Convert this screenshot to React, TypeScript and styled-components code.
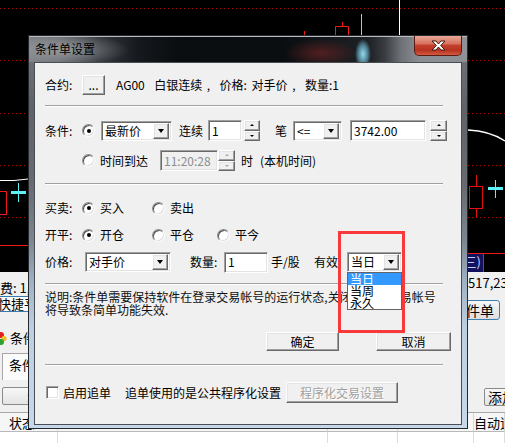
import React from "react";
import styled, { createGlobalStyle, css } from "styled-components";

const FONT = `"Noto Sans CJK SC", "Noto Sans", sans-serif`;

const Global = createGlobalStyle`
  html, body { margin: 0; padding: 0; background: #000; }
  body { font-family: ${FONT}; font-size: 12px; }
`;

const Desktop = styled.div`
  position: relative;
  width: 505px;
  height: 443px;
  background: #000;
  display: flex;
  flex-direction: column;
  font-family: ${FONT};
  color: #000;
`;

const ChartSvg = styled.svg`
  display: block;
  flex-shrink: 0;
`;

function Chart() {
  const dotted = [8, 60, 113, 165, 217];
  return (
    <ChartSvg width={505} height={272} viewBox="0 0 505 272">
      <rect width="505" height="272" fill="#000" />
      {dotted.map((y) => (
        <line key={y} x1="0" x2="505" y1={y + 0.5} y2={y + 0.5} stroke="#b80000" strokeDasharray="1 3" />
      ))}
      <line x1="399.5" y1="0" x2="399.5" y2="35" stroke="#fff" />
      <line x1="361.5" y1="14" x2="361.5" y2="35" stroke="#5ee8f4" />
      <path d="M335.5 35 V26.5 H348.5 V35" stroke="#f01818" fill="none" />
      <path d="M342.5 22 V26.5" stroke="#f01818" />
      <path d="M304.5 31 V35" stroke="#f01818" />
      <path d="M0 180.5 H14 L28 179" stroke="#fff" fill="none" />
      <rect x="-1.5" y="191.5" width="8" height="23" stroke="#f01818" fill="none" />
      <rect x="11" y="191" width="15" height="3" fill="#5ef0f8" />
      <line x1="18.5" y1="183" x2="18.5" y2="202" stroke="#5ef0f8" />
      <line x1="0" y1="245.5" x2="28" y2="245.5" stroke="#f01818" />
      <path d="M468 130 Q490 131 505 141" stroke="#fff" strokeWidth="1.3" fill="none" />
      <rect x="469.5" y="186.5" width="13" height="22" stroke="#e41010" fill="none" />
      <line x1="476.5" y1="175" x2="476.5" y2="186" stroke="#e41010" />
      <line x1="476.5" y1="209" x2="476.5" y2="217" stroke="#e41010" />
      <rect x="488" y="187" width="15" height="3" fill="#5ef0f8" />
      <line x1="495.5" y1="180" x2="495.5" y2="198" stroke="#5ef0f8" />
      <rect x="440" y="254" width="43" height="18" fill="#12125e" />
      <line x1="440" y1="253.5" x2="505" y2="253.5" stroke="#f01818" />
      <line x1="483.5" y1="253" x2="483.5" y2="272" stroke="#f01818" />
      <text x="481" y="267" textAnchor="end" fill="#c8ccff" fontSize="13" fontFamily={FONT}>
        (三)
      </text>
    </ChartSvg>
  );
}

const Panel = styled.div`
  flex: 1;
  background: #f0f0f0;
  display: flex;
  flex-direction: column;
  font-size: 13px;
  overflow: hidden;
`;

const PanelRow = styled.div<{ $h: number }>`
  height: ${(p) => p.$h}px;
  flex-shrink: 0;
  display: flex;
  justify-content: space-between;
  align-items: flex-start;
`;

const PanelText = styled.span<{ $pt?: number; $mr?: number }>`
  padding-top: ${(p) => p.$pt ?? 0}px;
  margin-right: ${(p) => p.$mr ?? 0}px;
  line-height: 16px;
  white-space: nowrap;
`;

const FlatTab = styled.div`
  margin-left: -3px;
  width: 70px;
  height: 16px;
  box-sizing: border-box;
  border: 1px solid #3a78b0;
  background: #fafafa;
  line-height: 14px;
  white-space: nowrap;
`;

const FocusButton = styled.div`
  margin-top: 4px;
  margin-right: 5px;
  width: 44px;
  height: 20px;
  box-sizing: border-box;
  border: 1px solid #3c7fb1;
  border-radius: 3px;
  background: linear-gradient(#f6f6f6, #dedede);
  font-size: 14px;
  line-height: 18px;
  text-align: right;
  padding-right: 5px;
  white-space: nowrap;
`;

const IconLabel = styled.div`
  margin-top: 8px;
  display: flex;
  align-items: center;
  gap: 3px;
  margin-left: -2px;
  line-height: 16px;
`;

const TabBox = styled.div`
  margin-top: 3px;
  margin-left: 2px;
  width: 60px;
  height: 27px;
  box-sizing: border-box;
  border: 1px solid #a8a8a8;
  border-bottom: none;
  background: #fbfbfb;
  padding-left: 6px;
  line-height: 22px;
  white-space: nowrap;
`;

const GhostButton = styled.div<{ $w: number; $mt: number; $ml?: number; $mr?: number; $pl?: number }>`
  margin-top: ${(p) => p.$mt}px;
  margin-left: ${(p) => p.$ml ?? 0}px;
  margin-right: ${(p) => p.$mr ?? 0}px;
  width: ${(p) => p.$w}px;
  height: 18px;
  box-sizing: border-box;
  border: 1px solid #8a8a8a;
  border-radius: 2px;
  background: linear-gradient(#f7f7f7, #e4e4e4);
  line-height: 16px;
  padding-left: ${(p) => p.$pl ?? 3}px;
  font-size: 14px;
  white-space: nowrap;
  overflow: hidden;
`;

const Table = styled.div`
  margin-top: 2px;
  flex: 1;
  border-top: 1px solid #a8a8a8;
  display: grid;
  grid-template-columns: 58px 270px 70px 76px 1fr;
  grid-template-rows: 19px 1fr;
  background: #fff;
`;

const HeadCell = styled.div<{ $pl?: number }>`
  background: #f6f6f6;
  border-right: 1px solid #d6d6d6;
  border-bottom: 1px solid #b8b8b8;
  padding-left: ${(p) => p.$pl ?? 0}px;
  line-height: 19px;
  font-size: 13px;
  white-space: nowrap;
  overflow: hidden;
`;

const BodyCell = styled.div`
  border-right: 1px solid #dcdcdc;
`;

const DialogWindow = styled.div`
  position: absolute;
  left: 28px;
  top: 35px;
  width: 440px;
  height: 394px;
  box-sizing: border-box;
  border: 1px solid #25292d;
  background: linear-gradient(to bottom, #74787c 0px, #5f6367 70px, #686c71 150px, #7c8690 205px, #9eb1c3 245px, #bccfe1 290px, #c6d8ea 394px);
  display: flex;
  flex-direction: column;
`;

const GlassCaption = styled.div`
  height: 26px;
  flex-shrink: 0;
  display: flex;
  align-items: flex-start;
  padding: 0 5px;
  background-color: #0b0e11;
  background-image: radial-gradient(closest-side, rgba(152, 228, 247, 0.95), rgba(120, 205, 232, 0.55) 60%, rgba(120, 205, 232, 0)), radial-gradient(closest-side, rgba(124, 36, 36, 0.6), rgba(124, 36, 36, 0)), radial-gradient(closest-side, rgba(180, 185, 190, 0.6), rgba(180, 185, 190, 0)), linear-gradient(90deg, #7e8286 0px, #6a6e72 30px, #34383c 70px, #15181c 110px, #0a0d10 150px, #0b0e11 255px, #1e2125 340px, #393d41 356px, #6e7276 372px, #8a8e92 390px, #8e9296 438px);
  background-size: 16px 30px, 72px 28px, 124px 32px, 100% 100%;
  background-position: 326px 2px, 256px 2px, -24px -3px, 0 0;
  background-repeat: no-repeat;
  border-top: 1px solid #b8bcc0;
  box-sizing: border-box;
`;

const CaptionText = styled.span`
  margin-top: 4px;
  margin-left: 1px;
  font-size: 12px;
  line-height: 16px;
  color: #000;
`;

const CloseButton = styled.div`
  margin-left: auto;
  margin-top: -1px;
  width: 48px;
  height: 20px;
  box-sizing: border-box;
  border: 1px solid #5a1c12;
  border-top: none;
  border-radius: 0 0 5px 5px;
  background: linear-gradient(#e8a797 0%, #d8735f 40%, #c3412c 50%, #b73320 75%, #d35a40 100%);
  display: flex;
  align-items: center;
  justify-content: center;
`;

const Client = styled.div`
  margin: 0 5px;
  height: 363px;
  flex-shrink: 0;
  box-sizing: border-box;
  border: 1px solid #4a4e52;
  background: #f0f0f0;
  padding: 0 10px;
  display: flex;
  flex-direction: column;
  font-size: 12px;
  line-height: 1;
`;

const sunken = css`
  box-sizing: border-box;
  border: 1px solid;
  border-color: #a0a0a0 #ffffff #ffffff #a0a0a0;
  box-shadow: inset 1px 1px 0 #696969, inset -1px -1px 0 #e3e3e3;
`;

const raised = css`
  box-sizing: border-box;
  border: 1px solid;
  border-color: #ffffff #696969 #696969 #ffffff;
  box-shadow: inset -1px -1px 0 #a0a0a0, inset 1px 1px 0 #e3e3e3;
  background: #f0f0f0;
`;

const Row = styled.div<{ $top: number; $h: number; $end?: boolean }>`
  margin-top: ${(p) => p.$top}px;
  height: ${(p) => p.$h}px;
  flex-shrink: 0;
  display: flex;
  align-items: center;
  justify-content: ${(p) => (p.$end ? "flex-end" : "flex-start")};
  white-space: nowrap;
`;

const Sep = styled.div<{ $top: number }>`
  margin-top: ${(p) => p.$top}px;
  margin-right: 8px;
  height: 2px;
  flex-shrink: 0;
  box-sizing: border-box;
  border-top: 1px solid #a0a0a0;
  border-bottom: 1px solid #ffffff;
`;

const Label = styled.span<{ $w?: number; $ml?: number; $ws?: number }>`
  flex-shrink: 0;
  width: ${(p) => (p.$w ? `${p.$w}px` : "auto")};
  margin-left: ${(p) => p.$ml ?? 0}px;
  word-spacing: ${(p) => p.$ws ?? 0}px;
  white-space: pre;
`;

const PushButton = styled.div<{ $w: number; $h: number; $ml?: number; $disabled?: boolean }>`
  ${raised};
  flex-shrink: 0;
  width: ${(p) => p.$w}px;
  height: ${(p) => p.$h}px;
  margin-left: ${(p) => p.$ml ?? 0}px;
  display: flex;
  align-items: center;
  justify-content: center;
  color: ${(p) => (p.$disabled ? "#a0a0a0" : "#000")};
  text-shadow: ${(p) => (p.$disabled ? "1px 1px 0 #fff" : "none")};
`;

const Edit = styled.div<{ $w: number; $ml?: number; $disabled?: boolean }>`
  ${sunken};
  flex-shrink: 0;
  width: ${(p) => p.$w}px;
  height: 21px;
  margin-left: ${(p) => p.$ml ?? 0}px;
  padding-left: 3px;
  display: flex;
  align-items: center;
  background: ${(p) => (p.$disabled ? "#f0f0f0" : "#fff")};
  color: ${(p) => (p.$disabled ? "#8d8d8d" : "#000")};
`;

const ComboFrame = styled.div<{ $w: number; $ml?: number }>`
  ${sunken};
  position: relative;
  flex-shrink: 0;
  width: ${(p) => p.$w}px;
  height: 20px;
  margin-left: ${(p) => p.$ml ?? 0}px;
  background: #fff;
  display: flex;
  align-items: center;
  padding: 2px;
`;

const ComboValue = styled.span`
  flex: 1;
  padding-left: 1px;
  overflow: hidden;
`;

const DropButton = styled.span`
  ${raised};
  width: 16px;
  height: 16px;
  display: flex;
  align-items: center;
  justify-content: center;
`;

const Arrow = styled.span<{ $up?: boolean; $size?: number; $color?: string }>`
  width: 0;
  height: 0;
  border-left: ${(p) => p.$size ?? 3.5}px solid transparent;
  border-right: ${(p) => p.$size ?? 3.5}px solid transparent;
  ${(p) =>
    p.$up
      ? `border-bottom: ${Math.ceil(p.$size ?? 3.5)}px solid ${p.$color ?? "#000"};`
      : `border-top: ${Math.ceil(p.$size ?? 3.5)}px solid ${p.$color ?? "#000"};`}
`;

const SpinStack = styled.div<{ $w: number; $ml?: number }>`
  flex-shrink: 0;
  width: ${(p) => p.$w}px;
  height: 21px;
  margin-left: ${(p) => p.$ml ?? 0}px;
  display: flex;
  flex-direction: column;
`;

const SpinButton = styled.span`
  ${raised};
  flex: 1;
  display: flex;
  align-items: center;
  justify-content: center;
`;

const DropList = styled.div`
  position: absolute;
  left: -1px;
  top: calc(100% + 1px);
  width: 55px;
  box-sizing: border-box;
  border: 1px solid #646464;
  background: #fff;
  z-index: 2;
`;

const DropItem = styled.div<{ $active?: boolean }>`
  height: 12px;
  line-height: 12px;
  padding-left: 2px;
  font-size: 12px;
  background: ${(p) => (p.$active ? "#3399ff" : "#fff")};
  color: ${(p) => (p.$active ? "#fff" : "#000")};
`;

const Radio = styled.span<{ $checked?: boolean }>`
  position: relative;
  flex-shrink: 0;
  width: 13px;
  height: 13px;
  box-sizing: border-box;
  border-radius: 50%;
  border: 1px solid;
  border-color: #8a8a8a #fdfdfd #fdfdfd #8a8a8a;
  box-shadow: inset 1px 1px 0 #505050, inset -1px -1px 0 #dcdcdc;
  background: #fff;
  &::after {
    content: "";
    display: ${(p) => (p.$checked ? "block" : "none")};
    position: absolute;
    left: 3.5px;
    top: 3.5px;
    width: 4px;
    height: 4px;
    border-radius: 50%;
    background: #000;
  }
`;

const Option = styled.span<{ $w?: number }>`
  display: flex;
  align-items: center;
  gap: 5px;
  width: ${(p) => (p.$w ? `${p.$w}px` : "auto")};
  flex-shrink: 0;
`;

const CheckBox = styled.span<{ $ml?: number }>`
  ${sunken};
  flex-shrink: 0;
  width: 13px;
  height: 13px;
  margin-left: ${(p) => p.$ml ?? 0}px;
  background: #fff;
`;

const Desc = styled.div<{ $top: number }>`
  margin-top: ${(p) => p.$top}px;
  line-height: 13px;
  flex-shrink: 0;
  white-space: nowrap;
  color: #111;
`;

const Annotation = styled.div`
  position: absolute;
  left: 338px;
  top: 231px;
  width: 67px;
  height: 102px;
  box-sizing: border-box;
  border: 3px solid #fa3a3a;
  pointer-events: none;
  z-index: 5;
`;

function Combo({ w, ml, value, children }: { w: number; ml?: number; value: string; children?: React.ReactNode }) {
  return (
    <ComboFrame $w={w} $ml={ml}>
      <ComboValue>{value}</ComboValue>
      <DropButton>
        <Arrow />
      </DropButton>
      {children}
    </ComboFrame>
  );
}

function Spin({ w, ml, disabled }: { w: number; ml?: number; disabled?: boolean }) {
  const c = disabled ? "#a8a8a8" : "#000";
  return (
    <SpinStack $w={w} $ml={ml}>
      <SpinButton>
        <Arrow $up $size={2} $color={c} />
      </SpinButton>
      <SpinButton>
        <Arrow $size={2} $color={c} />
      </SpinButton>
    </SpinStack>
  );
}

function CloseGlyph() {
  return (
    <svg width="15" height="11" viewBox="0 0 15 11">
      <path
        d="M1 1 H5 L7.5 4 L10 1 H14 L9.7 5.5 L14 10 H10 L7.5 7 L5 10 H1 L5.3 5.5 Z"
        fill="#ffffff"
        stroke="#3b1c16"
        strokeWidth="1"
        strokeLinejoin="round"
      />
    </svg>
  );
}

function Flower() {
  return (
    <svg width="9" height="13" viewBox="0 0 9 13">
      <circle cx="3" cy="3" r="3" fill="#e02020" />
      <circle cx="6" cy="6.5" r="2.6" fill="#f0c020" />
      <circle cx="3" cy="10" r="3" fill="#30a030" />
    </svg>
  );
}

export default function App() {
  return (
    <>
      <Global />
      <Desktop>
        <Chart />
        <Panel>
          <PanelRow $h={24}>
            <PanelText $pt={8}>费: 1,</PanelText>
            <PanelText $pt={3} $mr={-10}>1,517,234</PanelText>
          </PanelRow>
          <PanelRow $h={26}>
            <FlatTab>快捷平仓</FlatTab>
            <FocusButton>件单</FocusButton>
          </PanelRow>
          <PanelRow $h={28}>
            <IconLabel>
              <Flower />
              <span>条件单</span>
            </IconLabel>
          </PanelRow>
          <PanelRow $h={30}>
            <TabBox>条件单</TabBox>
          </PanelRow>
          <PanelRow $h={30}>
            <GhostButton $w={40} $mt={7} $ml={2} $pl={23}>
              ±
            </GhostButton>
            <GhostButton $w={30} $mt={8} $mr={-9}>
              添加
            </GhostButton>
          </PanelRow>
          <Table>
            <HeadCell $pl={9}>状态</HeadCell>
            <HeadCell />
            <HeadCell />
            <HeadCell />
            <HeadCell>自动追单</HeadCell>
            <BodyCell />
            <BodyCell />
            <BodyCell />
            <BodyCell />
            <BodyCell />
          </Table>
        </Panel>

        <DialogWindow>
          <GlassCaption>
            <CaptionText>条件单设置</CaptionText>
            <CloseButton>
              <CloseGlyph />
            </CloseButton>
          </GlassCaption>
          <Client>
            <Row $top={12} $h={20}>
              <Label $w={37}>合约:</Label>
              <PushButton $w={23} $h={20}>
                ...
              </PushButton>
              <Label $ml={11} $ws={2}>AG00  白银连续 ,  价格: 对手价 ,  数量:1</Label>
            </Row>
            <Sep $top={10} />
            <Row $top={13} $h={21}>
              <Label $w={37}>条件:</Label>
              <Radio $checked />
              <Combo w={71} ml={6} value="最新价" />
              <Label $w={29} $ml={7}>
                连续
              </Label>
              <Edit $w={34}>1</Edit>
              <Spin w={16} ml={2} />
              <Label $w={18} $ml={15}>
                笔
              </Label>
              <Combo w={49} value="<=" />
              <Edit $w={76} $ml={8}>
                3742.00
              </Edit>
              <Spin w={17} ml={4} />
            </Row>
            <Row $top={9} $h={21}>
              <Label $w={37} />
              <Option>
                <Radio />
                <Label $w={60}>时间到达</Label>
              </Option>
              <Edit $w={58} $disabled>
                11:20:28
              </Edit>
              <Spin w={17} disabled />
              <Label $w={19} $ml={6}>
                时
              </Label>
              <Label>(本机时间)</Label>
            </Row>
            <Sep $top={12} />
            <Row $top={13} $h={20}>
              <Label $w={37}>买卖:</Label>
              <Option $w={70}>
                <Radio $checked />
                买入
              </Option>
              <Option $w={65}>
                <Radio />
                卖出
              </Option>
            </Row>
            <Row $top={7} $h={20}>
              <Label $w={37}>开平:</Label>
              <Option $w={70}>
                <Radio $checked />
                开仓
              </Option>
              <Option $w={65}>
                <Radio />
                平仓
              </Option>
              <Option>
                <Radio />
                平今
              </Option>
            </Row>
            <Row $top={7} $h={20}>
              <Label $w={40}>价格:</Label>
              <Combo w={86} value="对手价" />
              <Label $w={34} $ml={19}>
                数量:
              </Label>
              <Edit $w={44}>1</Edit>
              <Label $w={43} $ml={3}>
                手/股
              </Label>
              <Label $w={33}>有效</Label>
              <Combo w={55} value="当日">
                <DropList>
                  <DropItem $active>当日</DropItem>
                  <DropItem>当周</DropItem>
                  <DropItem>永久</DropItem>
                </DropList>
              </Combo>
            </Row>
            <Sep $top={11} />
            <Desc $top={5}>
              说明:条件单需要保持软件在登录交易帐号的运行状态,关闭软件或交易帐号
              <br />
              将导致条简单功能失效.
            </Desc>
            <Row $top={16} $h={19} $end>
              <PushButton $w={73} $h={19}>
                确定
              </PushButton>
              <PushButton $w={75} $h={19} $ml={37}>
                取消
              </PushButton>
            </Row>
            <Sep $top={13} />
            <Row $top={16} $h={21}>
              <CheckBox $ml={1} />
              <Label $w={62} $ml={4}>
                启用追单
              </Label>
              <Label $w={161}>追单使用的是公共程序化设置</Label>
              <PushButton $w={112} $h={21} $disabled>
                程序化交易设置
              </PushButton>
            </Row>
          </Client>
        </DialogWindow>
        <Annotation />
      </Desktop>
    </>
  );
}
